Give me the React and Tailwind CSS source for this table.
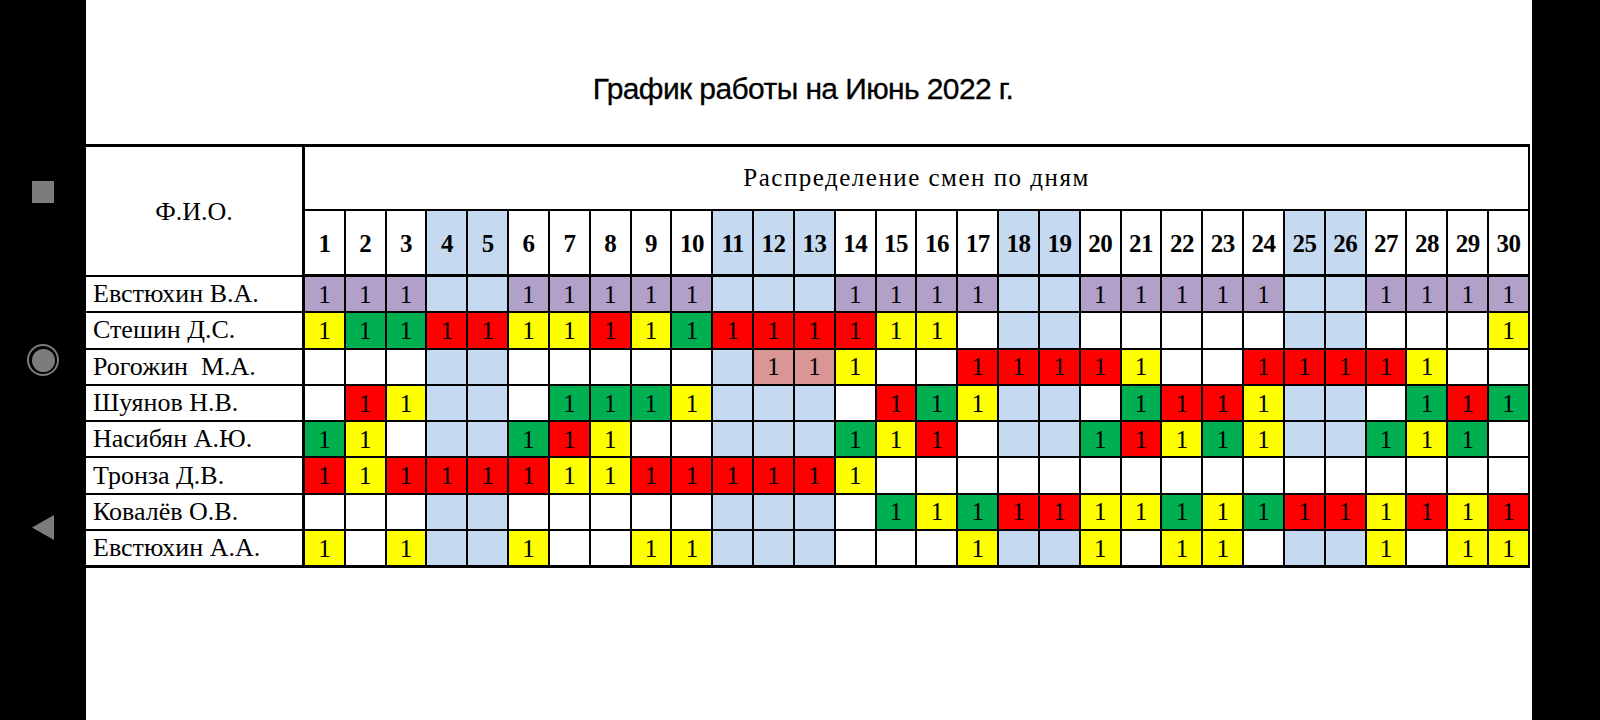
import React from 'react';

const weekends = [4, 5, 11, 12, 13, 18, 19, 25, 26];
const days = Array.from({ length: 30 }, (_, i) => i + 1);

// L - лавандовый, Y - жёлтый, G - зелёный, R - красный, P - розовый,
// . - пусто (голубой в выходные), w - всегда белый
const rows = [
  { name: 'Евстюхин В.А.', plan: 'LLL..LLLLL...LLLL..LLLLL..LLLL' },
  { name: 'Стешин Д.С.', plan: 'YGGRRYYRYGRRRRYY.............Y' },
  { name: 'Рогожин\u00a0 М.А.', plan: '...........PPY..RRRRY..RRRRY..' },
  { name: 'Шуянов Н.В.', plan: '.RY...GGGY....RGY...GRRY...GRG' },
  { name: 'Насибян А.Ю.', plan: 'GY...GRY.....GYR...GRYGY..GYG.' },
  { name: 'Тронза Д.В.', plan: 'RYRRRRYYRRRRRYwwwwwwwwwwwwwwww' },
  { name: 'Ковалёв О.В.', plan: '..............GYGRRYYGYGRRYRYR' },
  { name: 'Евстюхин А.А.', plan: 'Y.Y..Y..YY......Y..Y.YY...Y.YY' },
];

const colors = {
  L: 'bg-[#b1a0c7]',
  Y: 'bg-[#ffff00]',
  G: 'bg-[#00b050]',
  R: 'bg-[#ff0000]',
  P: 'bg-[#da9694]',
};

function cellClass(code, day) {
  if (colors[code]) return colors[code];
  if (code === 'w') return 'bg-white';
  return weekends.includes(day) ? 'bg-[#c5d9f1]' : 'bg-white';
}

function NavBar() {
  return (
    <div className="w-[86px] shrink-0 bg-black flex flex-col items-center pt-[181px]">
      <div className="w-[22px] h-[22px] bg-[#7c7c7c]" />
      <div className="mt-[141px] w-[32px] h-[32px] rounded-full border-2 border-[#7c7c7c] flex items-center justify-center">
        <div className="w-[23px] h-[23px] rounded-full bg-[#7c7c7c]" />
      </div>
      <svg className="mt-[139px]" width="22" height="25" viewBox="0 0 22 25">
        <path d="M22 0 L22 25 L0 12.5 Z" fill="#7c7c7c" />
      </svg>
    </div>
  );
}

export default function App() {
  return (
    <div className="w-[1600px] h-[720px] flex bg-black font-['Liberation_Serif',serif] text-black overflow-hidden">
      <NavBar />
      <div className="w-[1446px] shrink-0 bg-white">
        <div className="h-[144px] pt-[74px] flex justify-center pr-[12px]">
          <h1 className="font-['Liberation_Sans',Arial,sans-serif] text-[30px] leading-none tracking-[-0.6px] [-webkit-text-stroke:0.3px_black]">
            График работы на Июнь 2022 г.
          </h1>
        </div>

        <div className="w-[1444px] bg-black border-t-[3px] border-b-[3px] border-black pr-[2px] grid grid-cols-[217px_repeat(30,minmax(0,1fr))] grid-rows-[62px_64px_repeat(8,34.3px)] gap-[2px]">
          <div className="row-span-2 bg-white flex items-center justify-center text-[26px] mr-[1px]">
            Ф.И.О.
          </div>
          <div className="col-span-30 bg-white flex items-center justify-center text-[25px] tracking-[1.5px]">
            Распределение смен по дням
          </div>
          {days.map((d) => (
            <div
              key={d}
              className={`${weekends.includes(d) ? 'bg-[#c5d9f1]' : 'bg-white'} flex items-center justify-center pt-[3px] text-[25px] font-bold tracking-[-0.5px] border-b border-black`}
            >
              {d}
            </div>
          ))}
          {rows.map((r) => (
            <React.Fragment key={r.name}>
              <div className="bg-white flex items-center pl-[7px] text-[26px] leading-none whitespace-pre mr-[1px]">
                {r.name}
              </div>
              {days.map((d) => {
                const code = r.plan[d - 1];
                return (
                  <div
                    key={d}
                    className={`${cellClass(code, d)} flex items-center justify-center text-[25px] leading-none`}
                  >
                    {colors[code] ? '1' : ''}
                  </div>
                );
              })}
            </React.Fragment>
          ))}
        </div>
      </div>
      <div className="flex-1 bg-black" />
    </div>
  );
}
